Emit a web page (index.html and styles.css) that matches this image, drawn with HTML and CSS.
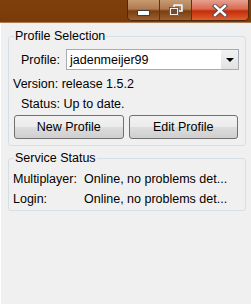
FILE: index.html
```html
<!DOCTYPE html>
<html>
<head><meta charset="utf-8"><link rel="stylesheet" href="styles.css"></head>
<body>
<div class="window">
  <div class="titlebar">
    <div class="caption">
      <div class="cbtn min"><span class="minbar"></span></div>
      <div class="cbtn max"><svg width="14" height="12" viewBox="0 0 14 12"><rect x="4.5" y="0.5" width="9" height="7" fill="none" stroke="#3a3f48" stroke-width="1"/><rect x="5" y="1" width="8" height="6" fill="none" stroke="#fff" stroke-width="1.6"/><rect x="1" y="4" width="8" height="7" fill="#7a4a22" stroke="#fff" stroke-width="1.8"/><rect x="0.5" y="3.5" width="9" height="8" fill="none" stroke="#3a3f48" stroke-width="0.8"/></svg></div>
      <div class="cbtn close"><svg width="16" height="13" viewBox="0 0 16 13"><path d="M3 2 L13 11 M13 2 L3 11" stroke="#4a4a52" stroke-width="4.2" stroke-linecap="square"/><path d="M3 2 L13 11 M13 2 L3 11" stroke="#fff" stroke-width="2.4" stroke-linecap="square"/></svg></div>
    </div>
  </div>
  <div class="client">
    <fieldset class="group g1">
      <legend>Profile Selection</legend>
      <div class="profile-row">
        <span class="lbl">Profile:</span>
        <div class="combo"><span class="val">jadenmeijer99</span><span class="arrow"></span></div>
      </div>
      <div class="line version">Version: release 1.5.2</div>
      <div class="line status">Status: Up to date.</div>
      <div class="buttons">
        <button class="btn">New Profile</button>
        <button class="btn">Edit Profile</button>
      </div>
    </fieldset>
    <fieldset class="group g2">
      <legend>Service Status</legend>
      <div class="srow first"><span class="skey">Multiplayer:</span><span>Online, no problems det...</span></div>
      <div class="srow"><span class="skey">Login:</span><span>Online, no problems det...</span></div>
    </fieldset>
  </div>
</div>
</body>
</html>
```
FILE: styles.css
```css
html, body { margin: 0; padding: 0; }
body {
  width: 251px; height: 304px; overflow: hidden;
  background: #f0f0f0;
  font-family: "Liberation Sans", Arial, sans-serif;
  font-size: 12.5px;
  color: #000;
  white-space: nowrap;
}
.window { width: 251px; height: 304px; display: flex; flex-direction: column; }
.titlebar {
  height: 22px;
  background: linear-gradient(#7e3f0c, #7a3b08);
  border-bottom: 1px solid #b07a50;
  display: flex; justify-content: flex-end;
}
.caption { display: flex; margin-right: 2px; height: 20px; border: 1px solid #4a2a10; border-top: none; border-radius: 0 0 5px 5px; overflow: hidden; }
.cbtn { height: 20px; display: flex; align-items: center; justify-content: center; }
.min, .max {
  width: 31px;
  background: linear-gradient(#c79a72 0%, #b07b4e 45%, #7a3e10 55%, #a06030 100%);
  border-right: 1px solid #5a3416;
}
.close {
  width: 56px;
  background: linear-gradient(#e8a090 0%, #d96a50 45%, #c42c08 55%, #e06030 100%);
}
.minbar { display: block; width: 11px; height: 4px; background: #fff; border: 1px solid #3a3f48; margin-top: 6px; }
.client {
  flex: 1;
  border-left: 1px solid #ffffff;
  padding: 6px 5px 0 7px;
}
.group {
  margin: 0;
  border: 1px solid #d5dfe5;
  border-radius: 3px;
  padding: 0 6px 6px 4px;
}
.group legend { padding: 0 1px; margin-left: 1px; line-height: 14px; }
.profile-row { display: flex; align-items: center; margin-top: 6px; height: 21px; }
.lbl { width: 45px; padding-left: 8px; }
.combo {
  flex: 1; height: 19px;
  border: 1px solid #a5acb5; background: #fff;
  display: flex; align-items: center;
}
.combo .val { padding-left: 3px; flex: 1; }
.combo .arrow {
  width: 17px; height: 19px; background: linear-gradient(#f2f2f2, #e2e2e2);
  display: flex; align-items: center; justify-content: center;
}
.combo .arrow::after {
  content: ""; border-left: 4px solid transparent; border-right: 4px solid transparent; border-top: 4px solid #000;
}
.line { height: 20px; line-height: 20px; }
.version { margin-top: 4px; }
.status { padding-left: 8px; }
.buttons { display: flex; gap: 5px; margin: 1px 1px 0 1px; }
.btn {
  flex: 1; height: 24px; font: inherit;
  border: 1px solid #707070; border-radius: 3px;
  background: linear-gradient(#f2f2f2 0%, #ebebeb 50%, #dddddd 50%, #cfcfcf 100%);
  color: #000; padding: 0;
}
.g2 { margin-top: 5px; padding-bottom: 1px; }
.srow { display: flex; height: 20px; line-height: 20px; }
.srow.first { margin-top: 4px; }
.skey { width: 71px; }
```
